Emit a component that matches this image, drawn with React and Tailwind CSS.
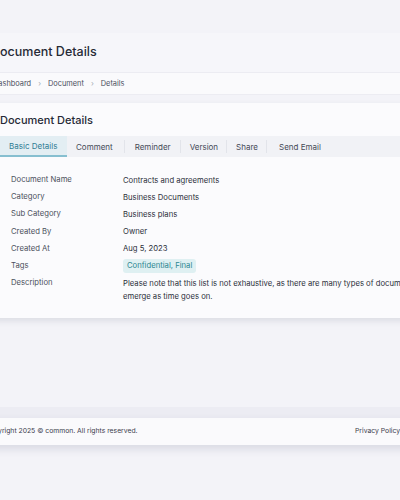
import { useState } from "react";

const details = [
  { label: "Document Name", value: "Contracts and agreements" },
  { label: "Category", value: "Business Documents" },
  { label: "Sub Category", value: "Business plans" },
  { label: "Created By", value: "Owner" },
  { label: "Created At", value: "Aug 5, 2023" },
  { label: "Tags", tags: "Confidential, Final" },
  {
    label: "Description",
    value:
      "Please note that this list is not exhaustive, as there are many types of documents, and new ones may emerge as time goes on.",
  },
];

const tabs = ["Basic Details", "Comment", "Reminder", "Version", "Share", "Send Email"];

export default function App() {
  const [activeTab, setActiveTab] = useState("Basic Details");

  return (
    <div
      className="w-[400px] h-[500px] overflow-hidden bg-[#f3f3f8] text-[#2b2f3a]"
      style={{ fontFamily: "Inter, 'Open Sans', sans-serif" }}
    >
      <div className="ml-[-20px] w-[480px] pt-[33px]">
        {/* page header */}
        <div className="h-[40px] bg-[#f6f6fa] border-b border-[#ececf2] flex items-center pl-[11px]">
          <h1 className="text-[12.5px] font-medium text-[#262a36]">Document Details</h1>
        </div>

        {/* breadcrumb */}
        <div className="h-[22px] bg-[#fafafc] border-b border-[#ececf2] flex items-center pl-[13px] text-[7.4px] text-[#4a4f5c]">
          <span>Dashboard</span>
          <span className="mx-[7px] text-[#a6aab4]">›</span>
          <span>Document</span>
          <span className="mx-[7px] text-[#a6aab4]">›</span>
          <span>Details</span>
        </div>

        {/* details card */}
        <div className="mt-[8px] h-[215px] bg-[#fbfbfd] shadow-[0_3px_6px_rgba(60,64,90,0.12)]">
          <div className="h-[33px] flex items-center pl-[20px] pt-[2px]">
            <h2 className="text-[11px] font-medium text-[#262a36]">Document Details</h2>
          </div>

          <div className="ml-[20px] h-[21px] bg-[#f1f2f6] flex items-stretch text-[8px] text-[#454a57]">
            {tabs.map((tab, i) => (
              <button
                key={tab}
                onClick={() => setActiveTab(tab)}
                className={`relative px-[9px] flex items-center ${
                  activeTab === tab
                    ? "bg-[#e3eef3] text-[#2f7d93] border-b-2 border-[#86bfd0] w-[67px]"
                    : i === 5
                    ? "pl-[12px]"
                    : ""
                } ${tab === "Comment" ? "pl-[9px] pr-[12px]" : ""} ${
                  tab === "Reminder" ? "px-[10px]" : ""
                } ${tab === "Version" ? "px-[9px]" : ""}`}
              >
                {tab}
                {i > 0 && i < 5 && (
                  <span className="absolute right-0 top-[4px] bottom-[4px] w-px bg-[#e2e4ea]" />
                )}
              </button>
            ))}
          </div>

          <div className="pl-[31px] pt-[18px] flex flex-col text-[7.7px]">
            {details.map((row) => (
              <div key={row.label} className="flex items-start min-h-[17.2px] leading-[10px]">
                <div className="w-[112px] shrink-0 text-[#4b505c]">{row.label}</div>
                {row.tags ? (
                  <span className="-mt-[2px] px-[4px] py-[2px] rounded-[3px] bg-[#dff0f2] text-[#2c8791]">
                    {row.tags}
                  </span>
                ) : (
                  <div className="w-[390px] shrink-0 text-[#2b2f3a] leading-[13px] -mt-[1.5px]">
                    {row.value}
                  </div>
                )}
              </div>
            ))}
          </div>
        </div>

        {/* footer */}
        <div className="mt-[89px] h-[11px] bg-[#ececf3]" />
        <div className="h-[27px] bg-[#fafafc] shadow-[0_4px_8px_rgba(60,64,100,0.14)] flex items-center justify-between pl-[5px] pr-[60px] text-[6.8px] text-[#3c404c]">
          <span>Copyright 2025 © common. All rights reserved.</span>
          <span>Privacy Policy</span>
        </div>
      </div>
    </div>
  );
}
